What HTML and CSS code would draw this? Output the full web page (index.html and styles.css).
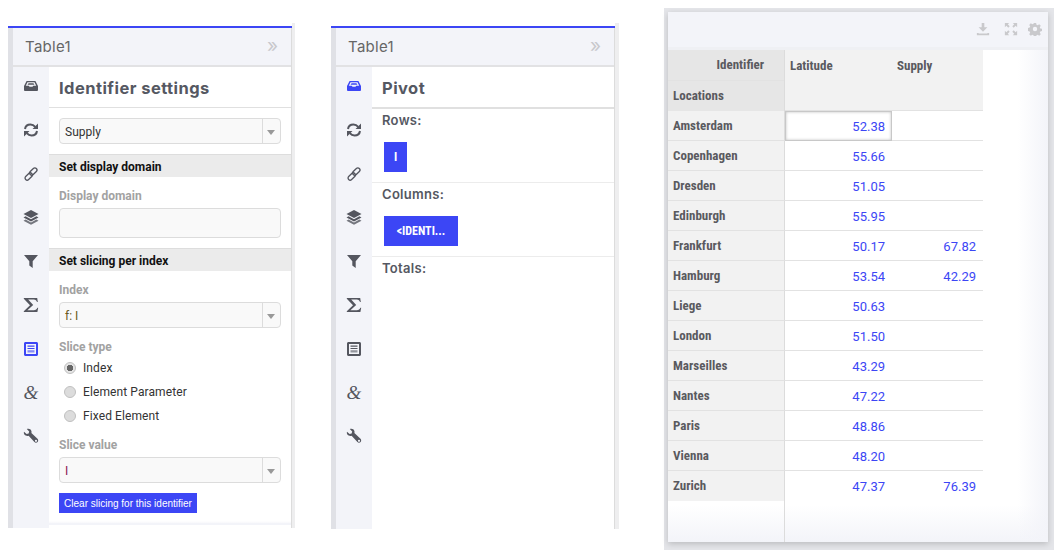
FILE: index.html
```html
<!doctype html>
<html lang="en">
  <head>
    <meta charset="UTF-8" />
    <title>Table settings</title>
    <link rel="stylesheet" href="styles.css">
  </head>
  <body>
    <svg class="defs" width="0" height="0">
      <symbol id="i-inbox" viewBox="0 0 16 16"><path fill-rule="evenodd" d="M3.600 3h8.800L15 8v3.700c0 .7-.5 1.300-1.200 1.300H2.200c-.7 0-1.200-.6-1.200-1.300V8zM4.500 4.200L2.800 7.700h3l.7 1.100h3l.7-1.100h3l-1.700-3.500z"/><path d="M5.300 5h5.400v.8H5.300zM4.800 6.300h6.400v.7H4.800z"/></symbol>
      <symbol id="i-loop" viewBox="0 0 16 16"><path fill="none" stroke="currentColor" stroke-width="2" d="M2 7c.4-2.700 2.800-4.500 5.500-4.500 2 0 3.500.9 4.700 2.300M14 9c-.4 2.700-2.800 4.500-5.500 4.500-2 0-3.500-.9-4.700-2.300"/><path d="M15 1.500V7H9.500zM1 14.500V9h5.500z"/></symbol>
      <symbol id="i-link" viewBox="0 0 16 16"><g fill="none" stroke="currentColor" stroke-width="1.300"><rect x="8.200" y="1.200" width="4.200" height="8.600" rx="2.100" transform="rotate(45 10.300 5.500)"/><rect x="3.600" y="6.200" width="4.200" height="8.600" rx="2.100" transform="rotate(45 5.700 10.500)"/></g></symbol>
      <symbol id="i-layers" viewBox="0 0 16 16"><path d="M8 1l7.500 4L8 9 .5 5z"/><path d="M2.600 7.300L8 10.200l5.400-2.900 2.100 1.100L8 12.400.5 8.400z"/><path d="M2.600 10.600L8 13.500l5.400-2.900 2.100 1.100L8 15.700.5 11.700z" opacity=".8"/></symbol>
      <symbol id="i-filter" viewBox="0 0 16 16"><path d="M1 2h14L9.700 8.300V15L6.300 12.500V8.300z"/></symbol>
      <symbol id="i-sigma" viewBox="0 0 16 16"><path d="M.8 1h13.400l.6 4h-.8c-.5-1.500-1.300-2.400-3.300-2.400H5.200l5 5.300-5.800 5.300h6.300c2.100 0 3-.8 3.700-2.400h.8L14.400 15H.8v-.7l6.200-6L.8 1.700z"/></symbol>
      <symbol id="i-list" viewBox="0 0 16 16"><path fill-rule="evenodd" d="M2.500 1h11c.8 0 1.500.7 1.500 1.500v11c0 .8-.7 1.500-1.500 1.500h-11C1.700 15 1 14.300 1 13.500v-11C1 1.700 1.700 1 2.500 1zM3 3v10h10V3z"/><path d="M4.500 4.500h7v1.200h-7zM4.500 6.900h7v1.200h-7z"/><path opacity=".6" d="M4.500 9.200h7v2.300h-7z"/></symbol>
      <symbol id="i-wrench" viewBox="0 0 16 16"><path fill-rule="evenodd" d="M1 3.800L3.600 6l2-.6.6-2L3.800 1C5.700.2 7.800 1 8.400 3c.2.800.2 1.500 0 2.100l6.100 5.700c.9.900.9 2.300.1 3.200-.9.900-2.300.9-3.200 0L5.600 7.800c-2.700.8-5.500-1.300-4.600-4zM13 11.700a1.100 1.100 0 1 0 0 2.200 1.100 1.100 0 0 0 0-2.200z"/></symbol>
    </svg>

    <div class="page">
      <!-- Identifier settings -->
      <section class="frame frame-first">
        <div class="blue-line"></div>
        <div class="panel">
          <header class="panel-head"><span>Table1</span><span class="collapse">&raquo;</span></header>
          <div class="panel-body">
            <nav class="side">
              <svg class="ic"><use href="#i-inbox"/></svg>
              <svg class="ic"><use href="#i-loop"/></svg>
              <svg class="ic"><use href="#i-link"/></svg>
              <svg class="ic"><use href="#i-layers"/></svg>
              <svg class="ic"><use href="#i-filter"/></svg>
              <svg class="ic"><use href="#i-sigma"/></svg>
              <svg class="ic ic-active"><use href="#i-list"/></svg>
              <span class="amp">&amp;</span>
              <svg class="ic"><use href="#i-wrench"/></svg>
            </nav>
            <div class="content">
              <h2 class="title">Identifier settings</h2>
              <div class="group top-select">
                <div class="select"><span>Supply</span><i class="caret"></i></div>
              </div>
              <h3 class="bar">Set display domain</h3>
              <div class="group domain">
                <label class="lbl">Display domain</label>
                <div class="text-input"></div>
              </div>
              <h3 class="bar">Set slicing per index</h3>
              <div class="group slicing">
                <label class="lbl">Index</label>
                <div class="select"><span class="val-orange">f: I</span><i class="caret"></i></div>
                <label class="lbl lbl-type">Slice type</label>
                <div class="radio radio-on"><i></i>Index</div>
                <div class="radio"><i></i>Element Parameter</div>
                <div class="radio"><i></i>Fixed Element</div>
                <label class="lbl lbl-value">Slice value</label>
                <div class="select"><span class="val-red">I</span><i class="caret"></i></div>
                <button class="clear">Clear slicing for this identifier</button>
              </div>
              <div class="foot"></div>
            </div>
          </div>
        </div>
      </section>

      <!-- Pivot -->
      <section class="frame frame-second">
        <div class="blue-line"></div>
        <div class="panel">
          <header class="panel-head"><span>Table1</span><span class="collapse">&raquo;</span></header>
          <div class="panel-body">
            <nav class="side">
              <svg class="ic ic-active"><use href="#i-inbox"/></svg>
              <svg class="ic"><use href="#i-loop"/></svg>
              <svg class="ic"><use href="#i-link"/></svg>
              <svg class="ic"><use href="#i-layers"/></svg>
              <svg class="ic"><use href="#i-filter"/></svg>
              <svg class="ic"><use href="#i-sigma"/></svg>
              <svg class="ic"><use href="#i-list"/></svg>
              <span class="amp">&amp;</span>
              <svg class="ic"><use href="#i-wrench"/></svg>
            </nav>
            <div class="content">
              <h2 class="title title-thick">Pivot</h2>
              <div class="pivot-row">
                <h4>Rows:</h4>
                <span class="chip chip-small">I</span>
              </div>
              <div class="pivot-row">
                <h4>Columns:</h4>
                <span class="chip">&lt;IDENTI...</span>
              </div>
              <div class="pivot-row pivot-last">
                <h4>Totals:</h4>
              </div>
            </div>
          </div>
        </div>
      </section>

      <!-- Table widget -->
      <section class="widget">
        <div class="widget-inner">
          <header class="widget-head">
            <svg class="tool tool-first" viewBox="0 0 16 16"><path d="M6.500 1h3v5H13L8 11 3 6h3.500zM1 12.500h2V13h10v-.5h2V15H1z"/></svg>
            <svg class="tool" viewBox="0 0 16 16"><path d="M1 1h5L4.300 2.700 6.500 4.900 4.900 6.500 2.700 4.300 1 6zM15 1v5l-1.700-1.700-2.200 2.200-1.600-1.600 2.200-2.200L10 1zM1 15v-5l1.700 1.700 2.200-2.200 1.600 1.600-2.200 2.200L6 15zM15 15h-5l1.700-1.700-2.200-2.200 1.600-1.600 2.200 2.200L15 10z"/></svg>
            <svg class="tool" viewBox="0 0 16 16"><path fill-rule="evenodd" d="M6.700 1h2.600l.4 2 1.300.6 1.800-1.100 1.800 1.800-1.100 1.800.6 1.300 2 .4v2.600l-2 .4-.6 1.300 1.100 1.800-1.800 1.800-1.800-1.100-1.300.6-.4 2H6.700l-.4-2-1.300-.6-1.800 1.100-1.800-1.800 1.100-1.800-.6-1.300-2-.4V6.800l2-.4.6-1.300-1.100-1.800 1.800-1.800 1.800 1.100 1.300-.6zM8 5.500a2.500 2.500 0 1 0 0 5 2.500 2.500 0 0 0 0-5z"/></svg>
          </header>
          <div class="sheet">
            <div class="corner">
              <div class="corner-id">Identifier</div>
              <div class="corner-loc">Locations</div>
            </div>
            <div class="col-head">Latitude</div>
            <div class="col-head">Supply</div>

            <div class="row-head">Amsterdam</div><div class="num num-sel">52.38</div><div class="num"></div>
            <div class="row-head">Copenhagen</div><div class="num">55.66</div><div class="num"></div>
            <div class="row-head">Dresden</div><div class="num">51.05</div><div class="num"></div>
            <div class="row-head">Edinburgh</div><div class="num">55.95</div><div class="num"></div>
            <div class="row-head">Frankfurt</div><div class="num">50.17</div><div class="num">67.82</div>
            <div class="row-head">Hamburg</div><div class="num">53.54</div><div class="num">42.29</div>
            <div class="row-head">Liege</div><div class="num">50.63</div><div class="num"></div>
            <div class="row-head">London</div><div class="num">51.50</div><div class="num"></div>
            <div class="row-head">Marseilles</div><div class="num">43.29</div><div class="num"></div>
            <div class="row-head">Nantes</div><div class="num">47.22</div><div class="num"></div>
            <div class="row-head">Paris</div><div class="num">48.86</div><div class="num"></div>
            <div class="row-head">Vienna</div><div class="num">48.20</div><div class="num"></div>
            <div class="row-head row-end">Zurich</div><div class="num row-end">47.37</div><div class="num row-end">76.39</div>
          </div>
          <div class="sheet-rest"></div>
        </div>
      </section>
    </div>
  </body>
</html>
```

FILE: styles.css
```css
* {
  margin: 0;
  padding: 0;
  box-sizing: border-box;
}
html,
body {
  height: 100%;
  background: #fff;
  overflow: hidden;
}
body {
  font-family: Roboto, "Liberation Sans", sans-serif;
  color: #555;
}
.defs {
  position: absolute;
}
.page {
  display: flex;
  align-items: flex-start;
  padding: 8px 0 0 8px;
}

/* side panels */
.frame {
  margin-top: 15px;
  padding-top: 3px;
  border-right: 3px solid #eeeeef;
  width: 287px;
  height: 505px;
  display: flex;
  flex-direction: column;
}
.frame-second {
  width: 288px;
  border-right-width: 4px;
  margin-left: 36px;
  height: 506px;
}
.blue-line {
  height: 2px;
  flex: none;
  background: #3c46f5;
}
.panel {
  flex: 1;
  min-height: 0;
  display: flex;
  flex-direction: column;
  border-left: 5px solid #e0e1e6;
  border-right: 1px solid #dcdcdc;
}
.panel-head {
  height: 39px;
  flex: none;
  display: flex;
  justify-content: space-between;
  align-items: center;
  padding: 0 13px 0 12px;
  background: #f3f4f9;
  border-bottom: 2px solid #e2e2e4;
  font-family: Inter, sans-serif;
  font-size: 15px;
  color: #666;
  letter-spacing: .3px;
}
.collapse {
  font-size: 19px;
  color: #c8c8cc;
  letter-spacing: 0;
  margin-top: -3px;
}
.panel-body {
  flex: 1;
  min-height: 0;
  display: flex;
}
.side {
  width: 36px;
  flex: none;
  background: #f3f4f9;
  padding-top: 11px;
  display: flex;
  flex-direction: column;
  align-items: center;
  color: #54565f;
}
.ic {
  width: 16px;
  height: 16px;
  margin-bottom: 27.800px;
  fill: currentColor;
  flex: none;
}
.ic-active {
  color: #3c46f5;
}
.amp {
  font-family: "Liberation Serif", serif;
  font-style: italic;
  font-size: 19px;
  line-height: 16px;
  height: 16px;
  margin-bottom: 27.800px;
}
.content {
  flex: 1;
  display: flex;
  flex-direction: column;
  background: #fff;
}
.title {
  height: 41px;
  flex: none;
  padding-left: 10px;
  line-height: 43px;
  font-family: Inter, sans-serif;
  font-size: 16.500px;
  font-weight: 700;
  letter-spacing: .45px;
  color: #555862;
  border-bottom: 1px solid #e0e0e0;
}
.title-thick {
  height: 42px;
  border-bottom-width: 2px;
}
.group {
  padding: 0 10px;
}
.top-select {
  padding-top: 10px;
  padding-bottom: 10px;
}
.select {
  height: 26px;
  display: flex;
  align-items: center;
  justify-content: space-between;
  padding-left: 5px;
  background: #f9f9f9;
  border: 1px solid #dcdcdc;
  border-radius: 4px;
  font-size: 12px;
  color: #333;
}
.select span {
  padding-top: 2px;
}
.val-orange {
  color: #6b5a20;
}
.val-red {
  color: #8a1552;
}
.caret {
  width: 18px;
  height: 100%;
  border-left: 1px solid #dcdcdc;
  position: relative;
}
.caret::after {
  content: "";
  position: absolute;
  left: 4px;
  top: 11px;
  border: 4px solid transparent;
  border-top: 5px solid #999;
  border-bottom: 0;
}
.bar {
  height: 23px;
  flex: none;
  padding-left: 10px;
  line-height: 24px;
  background: #ebebeb;
  border-top: 1px solid #ddd;
  font-size: 12px;
  font-weight: 700;
  color: #111;
}
.lbl {
  display: block;
  font-size: 12px;
  font-weight: 700;
  color: #a2a2a2;
  line-height: 14px;
}
.domain {
  padding-top: 12px;
  padding-bottom: 10px;
}
.text-input {
  height: 30px;
  margin-top: 5px;
  background: #f9f9f9;
  border: 1px solid #dcdcdc;
  border-radius: 4px;
}
.slicing {
  padding-top: 12px;
}
.slicing .lbl {
  margin-bottom: 5px;
}
.slicing .lbl-type {
  margin-top: 12px;
  margin-bottom: 2px;
}
.slicing .lbl-value {
  margin-top: 10px;
  margin-bottom: 5px;
}
.radio {
  height: 24px;
  display: flex;
  align-items: center;
  padding-left: 5px;
  font-size: 12px;
  letter-spacing: .1px;
  color: #333;
}
.radio i {
  width: 12px;
  height: 12px;
  margin-right: 7px;
  border-radius: 50%;
  background: #dcdcdc;
  border: 1px solid #c0c0c0;
}
.radio-on i {
  background: radial-gradient(circle, #666 0 3px, #e4e4e4 3.500px);
}
.clear {
  display: block;
  width: 138px;
  height: 20px;
  margin-top: 10px;
  border: 0;
  background: #3c46f5;
  color: #fff;
  font-family: "Liberation Sans", sans-serif;
  font-size: 10px;
}
.foot {
  margin-top: 8px;
  height: 4px;
  flex: none;
  border-bottom: 2px solid #f3f4f9;
  background: linear-gradient(#fff, #f8f8fb);
}
.pivot-row {
  height: 74px;
  padding: 3px 10px 0;
  border-bottom: 1px solid #ececec;
}
.pivot-row h4 {
  height: 16px;
  line-height: 16px;
  font-family: Inter, sans-serif;
  font-size: 13px;
  font-weight: 600;
  letter-spacing: .3px;
  color: #555862;
}
.pivot-last {
  border-bottom: 0;
}
.chip {
  display: block;
  width: 74px;
  height: 30px;
  margin: 14px 0 0 2px;
  line-height: 30px;
  text-align: center;
  background: #3c46f5;
  color: #fff;
  font-size: 12px;
  font-weight: 700;
  font-stretch: 85%;
}
.chip-small {
  width: 23px;
}

/* table widget */
.widget {
  width: 390px;
  height: 542px;
  margin-left: 45px;
  padding: 4px 6px 8px 4px;
  background: #e4e5e9;
}
.widget-inner {
  height: 100%;
  display: flex;
  flex-direction: column;
  background: linear-gradient(to right, rgba(243, 244, 249, 0) 92%, #f3f4f9), linear-gradient(#fff 93%, #f3f4f9);
  box-shadow: 0 2px 6px rgba(0, 0, 0, .18);
}
.widget-head {
  height: 38px;
  flex: none;
  display: flex;
  justify-content: flex-end;
  align-items: center;
  gap: 10px;
  padding: 0 6px 2px 0;
  background: #f3f4f9;
  border-bottom: 3px solid #eff0f4;
}
.tool {
  width: 14px;
  height: 14px;
  fill: #c9c9cc;
}
.tool-first {
  margin-right: 4px;
}
.sheet {
  display: grid;
  grid-template-columns: 117px 107px 91px;
  width: 315px;
  flex: none;
}
.corner {
  border-right: 1px solid #dcdcdc;
  background: #e6e6e6;
}
.corner-id {
  height: 30px;
  line-height: 29px;
  text-align: right;
  padding-right: 20px;
}
.corner-loc {
  height: 31px;
  line-height: 30px;
  padding-left: 5px;
  border-top: 1px solid #e2e2e2;
}
.corner-id,
.corner-loc,
.col-head,
.row-head {
  font-size: 13px;
  font-weight: 700;
  color: #5a5a5f;
  font-stretch: 80%;
}
.col-head {
  height: 61px;
  padding: 8px 0 0 5px;
  line-height: 16px;
  background: #f2f2f2;
  border-bottom: 1px solid #e2e2e2;
}
.row-head {
  height: 30px;
  padding-left: 5px;
  line-height: 29px;
  background: #f2f2f2;
  border-right: 1px solid #dcdcdc;
  border-bottom: 1px solid #e2e2e2;
}
.num {
  height: 30px;
  padding-right: 7px;
  line-height: 31px;
  text-align: right;
  font-size: 13px;
  color: #3c46f5;
  background: #fff;
  border-bottom: 1px solid #e2e2e2;
}
.num-sel {
  border: 1px solid #c8c8c8;
  box-shadow: inset 0 0 3px rgba(0, 0, 0, .25);
  padding-right: 6px;
  line-height: 29px;
}
.row-end {
  border-bottom: 0;
}
.sheet-rest {
  flex: 1;
  width: 117px;
  border-right: 1px solid #dcdcdc;
}
```
